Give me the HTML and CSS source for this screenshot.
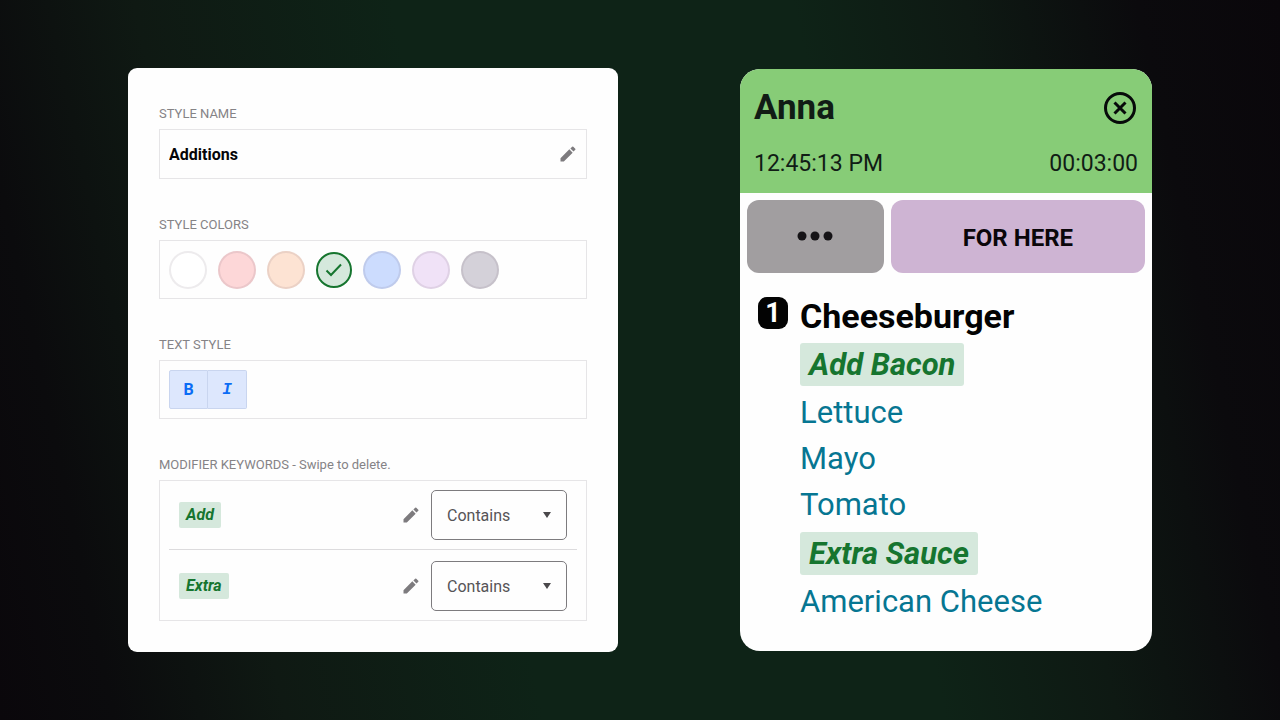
FILE: index.html
```html
<!DOCTYPE html>
<html lang="en">
<head>
    <meta charset="UTF-8">
    <meta name="viewport" content="width=device-width, initial-scale=1.0">
    <title>Modifier styles</title>
    <link rel="stylesheet" href="styles.css">
</head>
<body>

  <!-- shared pencil icon -->
  <svg class="sprite" width="0" height="0" aria-hidden="true">
    <symbol id="pencil" viewBox="0 0 24 24">
      <path d="M3 17V21h4L17.6 10.4l-4-4L3 17zM20.71 7.04a1 1 0 0 0 0-1.41l-2.34-2.34a1 1 0 0 0-1.41 0l-2.1 2.1 3.75 3.75 2.1-2.1z"/>
    </symbol>
  </svg>

  <main class="page">

    <form class="editor">
      <div class="field">
        <label class="label" for="style-name">STYLE NAME</label>
        <div class="box name-box">
          <input class="name-input" type="text" id="style-name" value="Additions">
          <button class="icon-button" type="button" aria-label="Edit name"><svg class="pencil"><use href="#pencil"/></svg></button>
        </div>
      </div>

      <div class="field" role="radiogroup" aria-labelledby="colors-label">
        <div class="label" id="colors-label">STYLE COLORS</div>
        <div class="box option-box swatches">
          <input class="swatch white" type="radio" name="color" aria-label="White">
          <input class="swatch red" type="radio" name="color" aria-label="Red">
          <input class="swatch orange" type="radio" name="color" aria-label="Orange">
          <label class="picked">
            <input class="swatch green" type="radio" name="color" aria-label="Green" checked>
            <svg class="check" viewBox="0 0 18 14"><path d="M1.5 7.5l4.5 4.5L16 1.5"/></svg>
          </label>
          <input class="swatch blue" type="radio" name="color" aria-label="Blue">
          <input class="swatch purple" type="radio" name="color" aria-label="Purple">
          <input class="swatch gray" type="radio" name="color" aria-label="Gray">
        </div>
      </div>

      <div class="field" role="group" aria-labelledby="text-label">
        <div class="label" id="text-label">TEXT STYLE</div>
        <div class="box option-box">
          <button class="toggle" type="button" aria-label="Bold" aria-pressed="true">B</button>
          <button class="toggle italic" type="button" aria-label="Italic" aria-pressed="true">I</button>
        </div>
      </div>

      <div class="field">
        <div class="label">MODIFIER KEYWORDS - Swipe to delete.</div>
        <ul class="box keywords">
          <li class="keyword">
            <span class="tag">Add</span>
            <button class="icon-button" type="button" aria-label="Edit Add"><svg class="pencil"><use href="#pencil"/></svg></button>
            <div class="match">
              <select class="match-select" aria-label="Match for Add">
                <option>Contains</option>
              </select>
              <svg class="arrow" viewBox="0 0 8 6"><path d="M0 0h8L4 6z"/></svg>
            </div>
          </li>
          <li class="keyword">
            <span class="tag">Extra</span>
            <button class="icon-button" type="button" aria-label="Edit Extra"><svg class="pencil"><use href="#pencil"/></svg></button>
            <div class="match">
              <select class="match-select" aria-label="Match for Extra">
                <option>Contains</option>
              </select>
              <svg class="arrow" viewBox="0 0 8 6"><path d="M0 0h8L4 6z"/></svg>
            </div>
          </li>
        </ul>
      </div>
    </form>

    <section class="ticket">
      <header class="ticket-header">
        <div class="ticket-row">
          <h1 class="customer">Anna</h1>
          <button class="close" type="button" aria-label="Close ticket">
            <svg viewBox="0 0 32 32">
              <circle cx="16" cy="16" r="14.5"/>
              <path d="M10.5 10.5l11 11M21.5 10.5l-11 11"/>
            </svg>
          </button>
        </div>
        <div class="ticket-row times">
          <span>12:45:13 PM</span>
          <span>00:03:00</span>
        </div>
      </header>

      <div class="actions">
        <button class="action more" type="button" aria-label="More">
          <svg viewBox="0 0 36 10"><circle cx="5" cy="5" r="4.5"/><circle cx="18" cy="5" r="4.5"/><circle cx="31" cy="5" r="4.5"/></svg>
        </button>
        <button class="action here" type="button">FOR HERE</button>
      </div>

      <div class="order">
        <span class="quantity">1</span>
        <div class="item">
          <h2 class="item-name">Cheeseburger</h2>
          <ul class="modifiers">
            <li class="styled">Add Bacon</li>
            <li>Lettuce</li>
            <li>Mayo</li>
            <li>Tomato</li>
            <li class="styled">Extra Sauce</li>
            <li>American Cheese</li>
          </ul>
        </div>
      </div>
    </section>

  </main>

</body>
</html>
```
FILE: styles.css
```css
* {
  box-sizing: border-box;
}

body {
  margin: 0;
  font-family: Roboto, "Liberation Sans", sans-serif;
  background: linear-gradient(78deg, #0a070b 0%, #0b0b0d 8%, #0f1913 20%, #0e2317 38%, #0e2317 66%, #0e1913 78%, #0b0a0d 90%, #0a070b 100%);
}

button, input, select {
  font-family: inherit;
  margin: 0;
}

button {
  border: none;
  padding: 0;
  background: none;
  cursor: pointer;
}

ul {
  list-style: none;
  margin: 0;
  padding: 0;
}

.sprite {
  position: absolute;
}

.page {
  display: grid;
  grid-template-columns: 490fr 412fr;
  gap: 122px;
  align-items: start;
  align-content: center;
  min-height: 100vh;
  padding: 0 10%;
}

/* style editor */

.editor {
  display: flex;
  flex-direction: column;
  gap: 38px;
  padding: 38px 31px 31px;
  background: #fefefe;
  border-radius: 9px;
}

.label {
  display: block;
  margin-bottom: 7px;
  font-size: 13px;
  line-height: 16px;
  color: #858386;
}

.box {
  border: 1px solid #e6e5e7;
}

.name-box {
  display: flex;
  align-items: center;
  height: 50px;
  padding: 0 8px 0 9px;
}

.name-input {
  flex: 1;
  min-width: 0;
  padding: 0;
  border: none;
  outline: none;
  background: none;
  font-size: 16px;
  font-weight: bold;
  color: #050508;
}

.icon-button {
  display: flex;
}

.pencil {
  width: 20px;
  height: 20px;
  fill: #7d7b7e;
}

.option-box {
  display: flex;
  align-items: center;
  padding: 9px;
  min-height: 59px;
}

.swatches {
  gap: 11px;
}

.swatch {
  appearance: none;
  width: 38px;
  height: 38px;
  border: 2px solid rgba(80, 60, 80, 0.1);
  border-radius: 50%;
}

.white { background-color: #ffffff; }
.red { background-color: #fdd7d8; }
.orange { background-color: #fde3d3; }
.green { background-color: #d5e8dc; }
.blue { background-color: #ccdcfe; }
.purple { background-color: #f0e2f7; }
.gray { background-color: #d4d1d9; }

.picked {
  display: grid;
  place-items: center;
}

.picked > * {
  grid-area: 1 / 1;
}

.picked .swatch {
  width: 36px;
  height: 36px;
  border-color: #16752f;
}

.check {
  width: 18px;
  height: 14px;
  fill: none;
  stroke: #16752f;
  stroke-width: 2;
}

.toggle {
  width: 39px;
  height: 39px;
  border: 1px solid #c9d5ef;
  border-radius: 2px 0 0 2px;
  background: #dde7fd;
  color: #0b6cf5;
  font-size: 16px;
  font-weight: bold;
}

.toggle.italic {
  border-left: none;
  border-radius: 0 2px 2px 0;
  font-family: "Liberation Mono", monospace;
  font-style: italic;
}

.keywords {
  padding: 0 9px;
}

.keyword {
  display: flex;
  align-items: center;
  gap: 10px;
  padding: 9px 10px;
}

.keyword + .keyword {
  padding-top: 11px;
  border-top: 1px solid #dcdbdd;
}

.tag {
  margin-right: auto;
  padding: 0 7px;
  border-radius: 2px;
  background: #d5e8dc;
  color: #16752f;
  font-size: 16px;
  line-height: 26px;
  font-weight: bold;
  font-style: italic;
}

.match {
  display: grid;
  align-items: center;
}

.match > * {
  grid-area: 1 / 1;
}

.match-select {
  appearance: none;
  width: 136px;
  height: 50px;
  padding: 0 15px;
  border: 1px solid #7d7b7e;
  border-radius: 5px;
  background: none;
  color: #565457;
  font-size: 16px;
}

.arrow {
  justify-self: end;
  width: 8px;
  height: 6px;
  margin-right: 16px;
  fill: #4a484b;
  pointer-events: none;
}

/* order ticket */

.ticket {
  overflow: hidden;
  margin-top: 1px;
  border-radius: 20px;
  background: #fefefe;
}

.ticket-header {
  padding: 15px 14px 13px;
  background: #87cc77;
  color: #111c15;
}

.ticket-row {
  display: flex;
  align-items: center;
  justify-content: space-between;
}

.customer {
  margin: 0;
  font-size: 35px;
  line-height: 47px;
}

.close {
  width: 32px;
  height: 32px;
  margin-right: 2px;
}

.close svg {
  display: block;
  fill: none;
  stroke: #070a0a;
  stroke-width: 3;
}

.times {
  padding-top: 17px;
  font-size: 23px;
  line-height: 32px;
}

.actions {
  display: flex;
  gap: 7px;
  padding: 7px 7px 0;
}

.action {
  height: 73px;
  border-radius: 12px;
  color: #0a060a;
}

.more {
  flex: 137;
  background: #a19ea0;
}

.more svg {
  width: 36px;
  height: 10px;
  fill: #151316;
}

.here {
  flex: 255;
  padding-top: 3px;
  background: #ceb4d3;
  font-size: 24px;
  font-weight: bold;
}

.order {
  display: flex;
  align-items: flex-start;
  gap: 12px;
  padding: 20px 18px 26px;
}

.quantity {
  width: 30px;
  margin-top: 4px;
  border-radius: 9px;
  background: #030303;
  color: #ffffff;
  font-size: 27px;
  font-weight: bold;
  line-height: 32px;
  text-align: center;
}

.item-name {
  margin: 0;
  font-size: 34px;
  line-height: 46px;
  color: #030303;
}

.modifiers {
  display: flex;
  flex-direction: column;
  align-items: flex-start;
  font-size: 31px;
  line-height: 46px;
  color: #067692;
}

.styled {
  margin: 4px 0;
  padding: 0 9px;
  border-radius: 3px;
  background: #d5e8dc;
  color: #16752f;
  font-weight: bold;
  font-style: italic;
  line-height: 43px;
}
```
